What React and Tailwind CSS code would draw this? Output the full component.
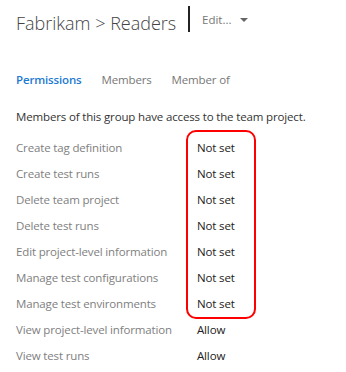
import React from "react";

const rows = [
  ["Create tag definition", "Not set"],
  ["Create test runs", "Not set"],
  ["Delete team project", "Not set"],
  ["Delete test runs", "Not set"],
  ["Edit project-level information", "Not set"],
  ["Manage test configurations", "Not set"],
  ["Manage test environments", "Not set"],
  ["View project-level information", "Allow"],
  ["View test runs", "Allow"],
];

export default function App() {
  return (
    <div className="relative w-[346px] h-[372px] overflow-hidden bg-white font-['Open_Sans',sans-serif]">
      {/* header */}
      <div className="flex items-start pt-[6px] pl-4">
        <div className="w-[172px] mt-[4px] text-[18px] leading-[26px] font-light text-[#444]">
          Fabrikam &gt; Readers
        </div>
        <div className="w-[2px] h-[26px] bg-[#222]" />
        <div className="flex items-center ml-3 mt-[1px] h-[26px]">
          <span className="text-[11.5px] leading-[26px] text-[#777]">Edit...</span>
          <span className="ml-2 w-0 h-0 border-l-[4px] border-r-[4px] border-t-[4px] border-l-transparent border-r-transparent border-t-[#666]" />
        </div>
      </div>

      {/* tabs */}
      <div className="flex gap-5 pl-4 mt-[34px] text-[11.5px] tracking-[-0.15px] leading-[20px]">
        <span className="font-semibold text-[#1e7ad0]">Permissions</span>
        <span className="text-[#777]">Members</span>
        <span className="text-[#777]">Member of</span>
      </div>

      <p className="pl-4 mt-[17px] text-[11.5px] tracking-[-0.15px] leading-[20px] text-[#333]">
        Members of this group have access to the team project.
      </p>

      {/* permissions */}
      <div className="mt-[8px] pl-4">
        {rows.map(([label, value]) => (
          <div key={label} className="flex h-[26px] items-center text-[11.5px] tracking-[-0.15px]">
            <span className="w-[181px] text-[#808080]">{label}</span>
            <span className="text-[#222]">{value}</span>
          </div>
        ))}
      </div>

      {/* highlight annotation */}
      <div className="absolute left-[186px] top-[130px] w-[70px] h-[189px] rounded-[10px] border-2 border-[#ff0000]" />
    </div>
  );
}
